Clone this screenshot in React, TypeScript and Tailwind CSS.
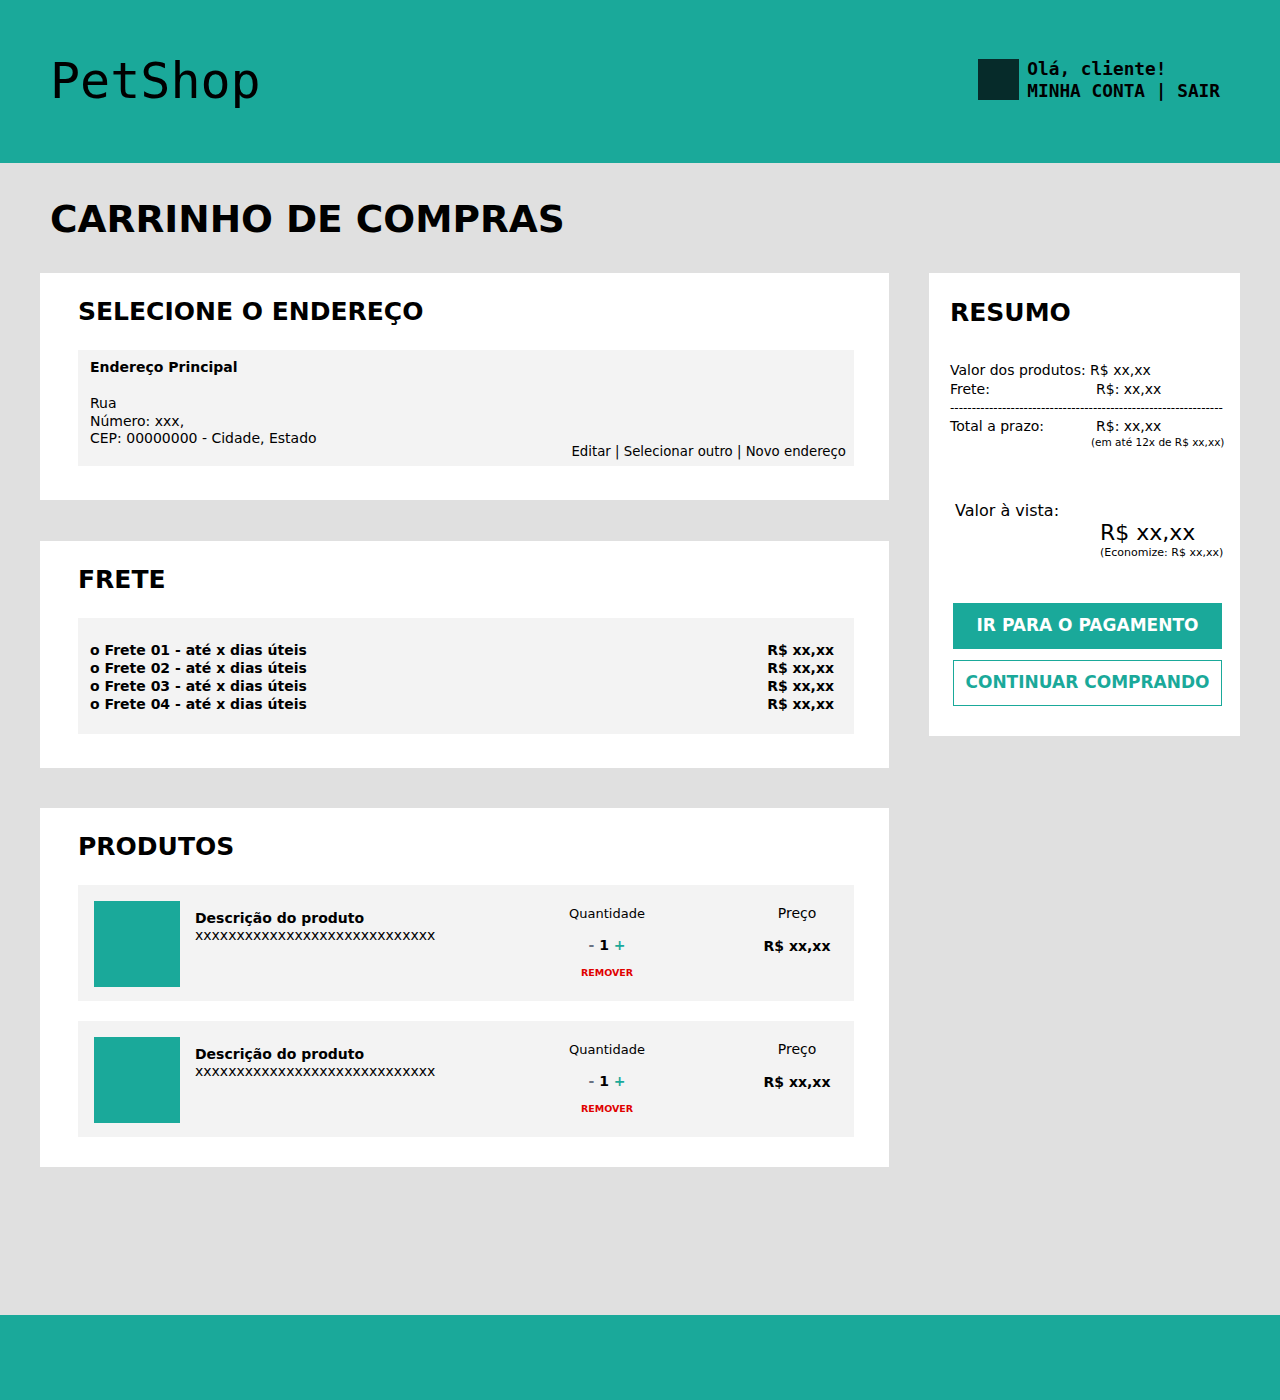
import React from "react";

const teal = "bg-[#1aa99a]";

function Card({ title, children, className = "" }: { title: string; children: React.ReactNode; className?: string }) {
  return (
    <section className={`bg-white pl-[38px] pr-[35px] pt-[24px] pb-[34px] ${className}`}>
      <h2 className="text-[25px] leading-[30px] font-bold text-black mb-[23px]">{title}</h2>
      {children}
    </section>
  );
}

function Product() {
  return (
    <div className="bg-[#f3f3f3] h-[116px] flex items-start p-[16px]">
      <div className="w-[86px] h-[86px] bg-[#1aa99a] shrink-0" />
      <div className="ml-[15px] pt-[8px] w-[300px]">
        <div className="text-[14px] leading-[18px] font-bold">Descrição do produto</div>
        <div className="text-[14px] leading-[16px]">xxxxxxxxxxxxxxxxxxxxxxxxxxxxx</div>
      </div>
      <div className="ml-auto w-[120px] flex flex-col items-center pt-[5px]">
        <div className="text-[13px] leading-[16px]">Quantidade</div>
        <div className="text-[14px] leading-[18px] font-bold mt-[14px]">
          <span className="text-gray-500">-</span> 1 <span className="text-[#1aa99a]">+</span>
        </div>
        <div className="text-[9.5px] leading-[12px] font-bold text-[#e00000] mt-[13px]">REMOVER</div>
      </div>
      <div className="ml-[85px] w-[90px] flex flex-col items-center pt-[3px] mr-[-4px]">
        <div className="text-[14px] leading-[18px]">Preço</div>
        <div className="text-[14px] leading-[18px] font-bold mt-[15px]">R$ xx,xx</div>
      </div>
    </div>
  );
}

export default function App() {
  return (
    <div className="min-h-[1400px] flex flex-col bg-[#e0e0e0] text-black" style={{ fontFamily: '"DejaVu Sans", sans-serif' }}>
      <header className={`${teal} h-[163px] flex items-center justify-between pl-[50px] pr-[60px] shrink-0`}>
        <div className="text-[50px] leading-none pb-[2px]" style={{ fontFamily: '"DejaVu Sans Mono", monospace' }}>PetShop</div>
        <div className="flex items-center gap-[8px] mb-[4px]">
          <div className="w-[41px] h-[41px] bg-[#062b2a]" />
          <div className="text-[17.8px] leading-[22px] font-bold" style={{ fontFamily: '"DejaVu Sans Mono", monospace' }}>
            <div>Olá, cliente!</div>
            <div>MINHA CONTA | SAIR</div>
          </div>
        </div>
      </header>

      <main className="flex-1 px-[40px] pt-[34px]">
        <h1 className="text-[37.5px] leading-[44px] font-bold pl-[10px] mb-[32px]">CARRINHO DE COMPRAS</h1>
        <div className="flex gap-[40px] items-start">
          <div className="w-[849px] flex flex-col gap-[40px]">
            <Card title="SELECIONE O ENDEREÇO" className="mb-[1px]">
              <div className="bg-[#f3f3f3] h-[116px] px-[12px] pt-[8px] pb-[7px] flex flex-col text-[14px] leading-[17.5px]">
                <div className="font-bold leading-[18px]">Endereço Principal</div>
                <div className="mt-[19px]">Rua</div>
                <div>Número: xxx,</div>
                <div className="flex justify-between items-end">
                  <span>CEP: 00000000 - Cidade, Estado</span>
                  <span className="text-[13.3px] mr-[-4px] translate-y-[13px]">Editar | Selecionar outro | Novo endereço</span>
                </div>
              </div>
            </Card>
            <Card title="FRETE">
              <div className="bg-[#f3f3f3] h-[116px] pl-[12px] pr-[20px] pt-[23px] text-[14px] leading-[18px] font-bold">
                {["01", "02", "03", "04"].map((n) => (
                  <div key={n} className="flex justify-between">
                    <span>o Frete {n} - até x dias úteis</span>
                    <span>R$ xx,xx</span>
                  </div>
                ))}
              </div>
            </Card>
            <section className="bg-white pl-[38px] pr-[35px] pt-[24px] pb-[30px]">
              <h2 className="text-[25px] leading-[30px] font-bold mb-[23px]">PRODUTOS</h2>
              <div className="flex flex-col gap-[20px]">
                <Product />
                <Product />
              </div>
            </section>
          </div>

          <aside className="w-[311px] bg-white pl-[21px] pr-[17px] pt-[25px] pb-[30px]">
            <h2 className="text-[25px] leading-[30px] font-bold">RESUMO</h2>
            <div className="mt-[33px] text-[14px] leading-[19px]">
              <div>Valor dos produtos: R$ xx,xx</div>
              <div className="flex"><span className="w-[146px]">Frete:</span><span>R$: xx,xx</span></div>
              <div className="whitespace-nowrap text-[12px] leading-[18px]">---------------------------------------------------------------</div>
              <div className="flex"><span className="w-[146px]">Total a prazo:</span><span>R$: xx,xx</span></div>
              <div className="text-[10.5px] leading-[12px] pl-[141px] whitespace-nowrap">(em até 12x de R$ xx,xx)</div>
            </div>
            <div className="mt-[53px] pl-[5px] text-[16px] leading-[20px]">Valor à vista:</div>
            <div className="pl-[150px] text-[22px] leading-[26px] mt-[-1px]">R$ xx,xx</div>
            <div className="pl-[150px] text-[11px] leading-[13px] whitespace-nowrap">(Economize: R$ xx,xx)</div>
            <div className="mt-[44px] pl-[3px] flex flex-col gap-[11px]">
              <button className="h-[46px] w-[269px] bg-[#1aa99a] text-white font-bold text-[17px]">IR PARA O PAGAMENTO</button>
              <button className="h-[46px] w-[269px] bg-white border border-[#1aa99a] text-[#1aa99a] font-bold text-[17px]">CONTINUAR COMPRANDO</button>
            </div>
          </aside>
        </div>
      </main>

      <footer className={`${teal} h-[85px] shrink-0`} />
    </div>
  );
}
